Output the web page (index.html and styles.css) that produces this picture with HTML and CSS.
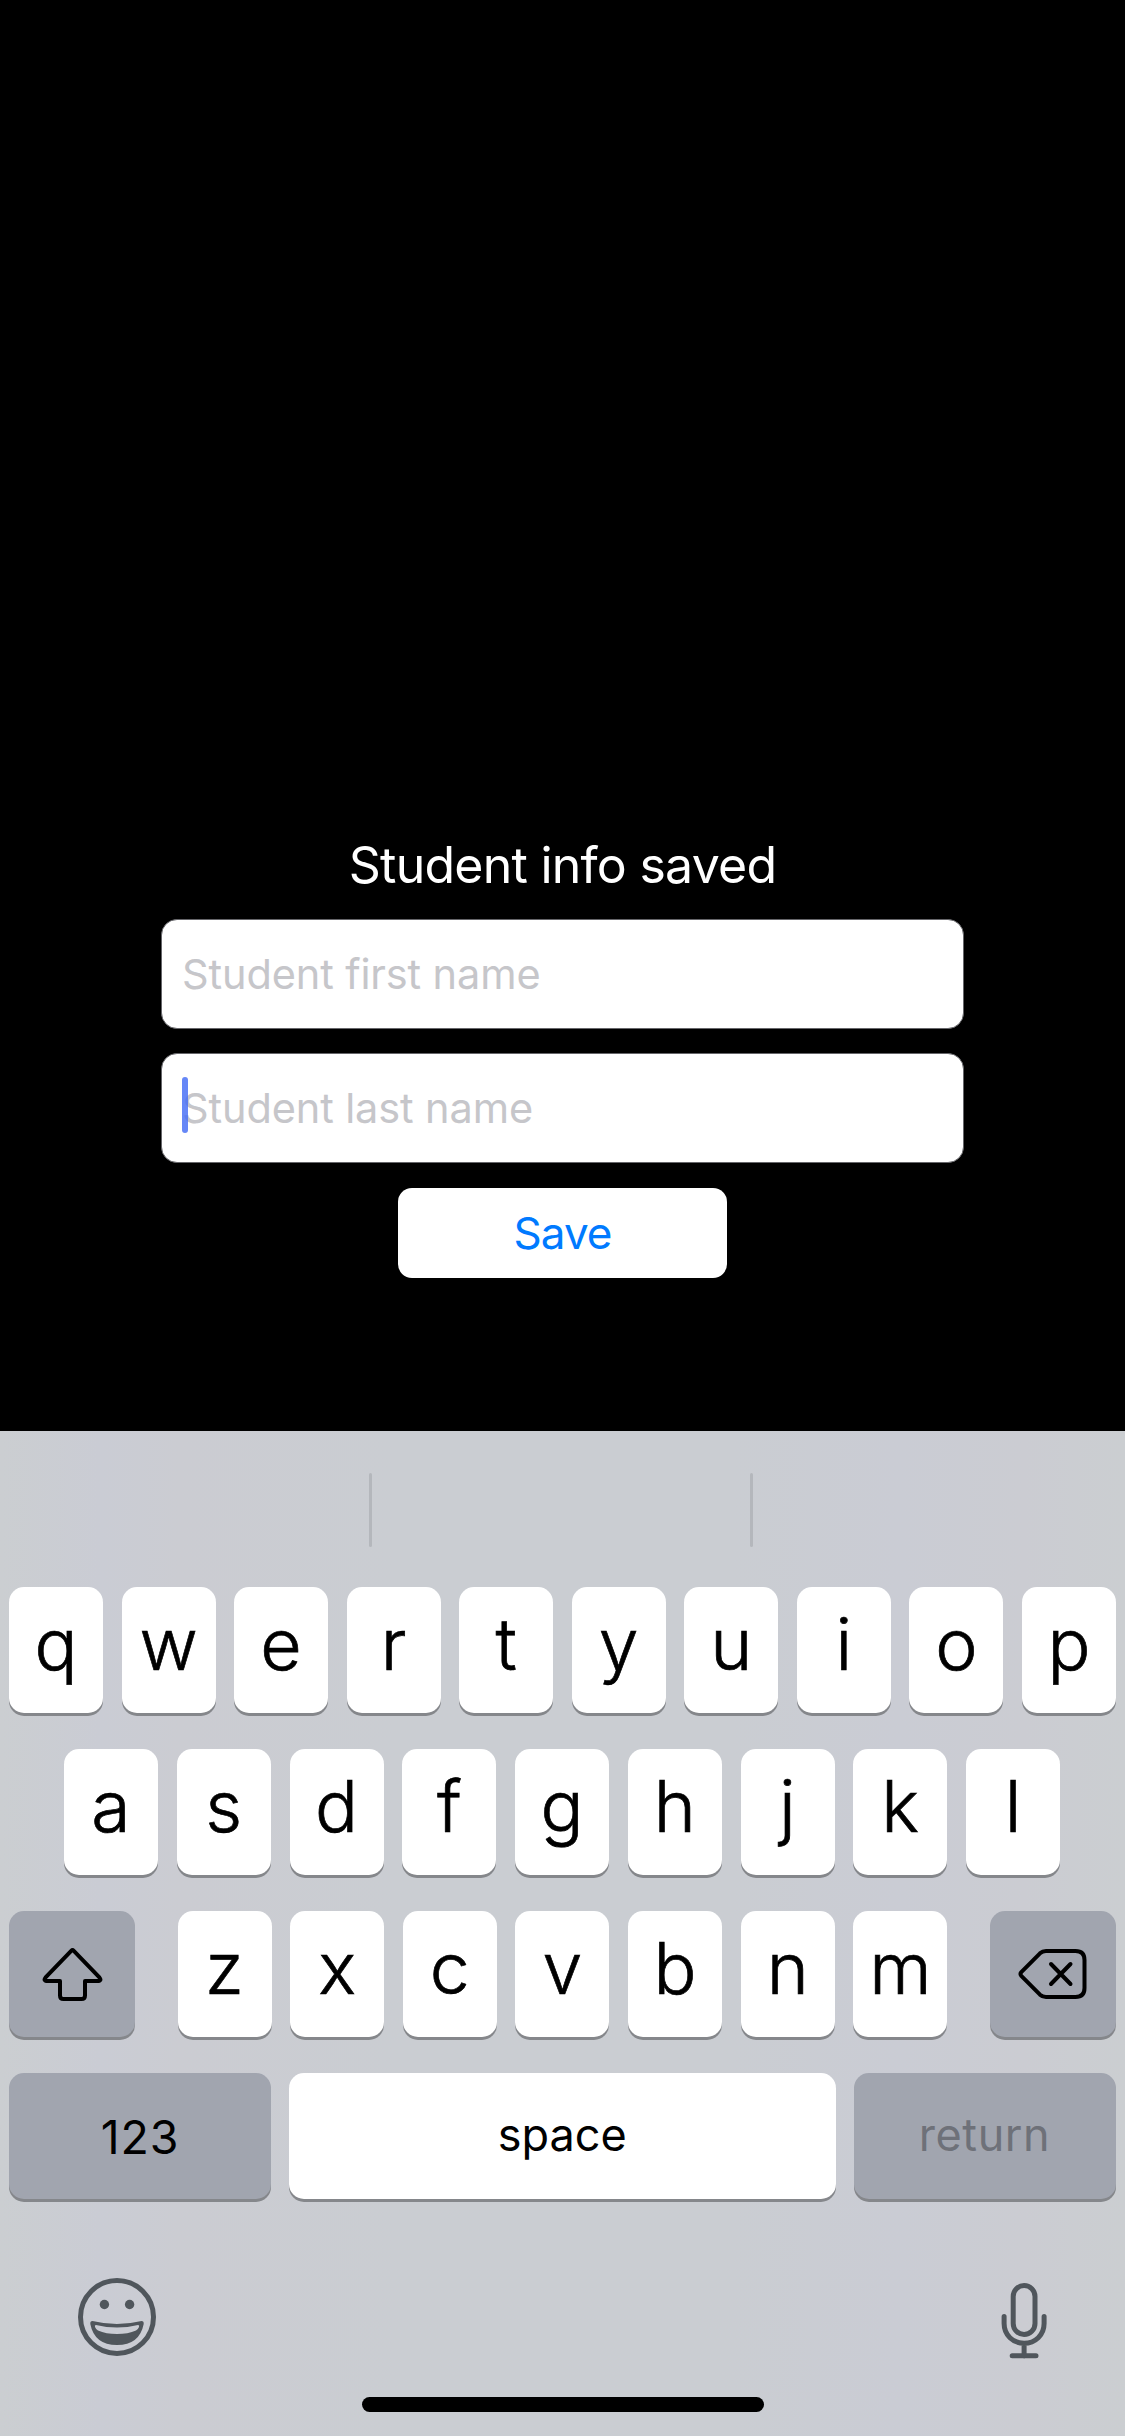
FILE: index.html
```html
<!DOCTYPE html>
<html lang="en">
<head>
<meta charset="utf-8">
<title>Student</title>
<link rel="stylesheet" href="styles.css">
</head>
<body>
<main class="form">
  <h1 class="status"><span class="status-text">Student info saved</span></h1>
  <div class="field"><span class="first">Student first name</span></div>
  <div class="field"><span class="last">Student last name</span><i class="caret"></i></div>
  <button class="save"><span>Save</span></button>
</main>
<section class="keyboard">
  <div class="suggestions"><i></i><i></i></div>
  <div class="row top">
    <b class="key">q</b><b class="key">w</b><b class="key">e</b><b class="key">r</b><b class="key">t</b><b class="key">y</b><b class="key">u</b><b class="key">i</b><b class="key">o</b><b class="key">p</b>
  </div>
  <div class="row home">
    <b class="key">a</b><b class="key">s</b><b class="key">d</b><b class="key">f</b><b class="key">g</b><b class="key">h</b><b class="key">j</b><b class="key">k</b><b class="key">l</b>
  </div>
  <div class="row lower">
    <b class="key dark mod"><svg width="126" height="126" viewBox="0 0 126 126" fill="none" stroke="#000" stroke-width="4" stroke-linejoin="round"><path d="M62.2 39.8Q63.5 38.5 64.8 39.8L90.4 66.4Q92 68.4 91 69.4Q90.4 70 89.5 70H76V84.5Q76 88 72.5 88H54.5Q51 88 51 84.5V70H37.5Q36.6 70 36 69.4Q35 68.4 36.6 66.4Z"/></svg></b>
    <div class="letters">
      <b class="key">z</b><b class="key">x</b><b class="key">c</b><b class="key">v</b><b class="key">b</b><b class="key">n</b><b class="key">m</b>
    </div>
    <b class="key dark mod"><svg width="126" height="126" viewBox="0 0 126 126" fill="none" stroke="#000" stroke-width="4" stroke-linejoin="round" stroke-linecap="round"><path d="M31.3 61.2L50 42.3Q52.5 40 56 40H85.5Q94.500 40 94.500 49V77Q94.500 86 85.5 86H56Q52.5 86 50 83.7L31.3 64.8Q29.7 63 31.3 61.2Z"/><path d="M61 53L80.5 73M80.5 53L61 73"/></svg></b>
  </div>
  <div class="row bottom">
    <b class="key dark numbers"><span>123</span></b>
    <b class="key space"><span>space</span></b>
    <b class="key dark return"><span>return</span></b>
  </div>
  <div class="tools">
    <svg width="78" height="78" viewBox="0 0 78 78"><circle cx="39" cy="39" r="36.5" fill="none" stroke="#50565c" stroke-width="5"/><circle cx="26.4" cy="26.5" r="4.7" fill="#50565c"/><circle cx="51.6" cy="26.5" r="4.7" fill="#50565c"/><path fill="#50565c" fill-rule="evenodd" d="M14.5 43Q39 49 63.5 43Q66 43 65.7 46Q61.5 67 39 67Q16.5 67 12.3 46Q12 43 14.5 43ZM18 47Q16.3 47 17 49Q18 51.5 20 52.5Q28 56 39 56Q50 56 58 52.5Q60 51.5 61 49Q61.7 47 60 47Q39 52 18 47Z"/></svg>
    <svg width="46" height="76" viewBox="0 0 46 76" fill="none" stroke="#50565c" stroke-width="5" stroke-linecap="round"><rect x="12.2" y="2.5" width="21.8" height="49" rx="10.9"/><path d="M3.1 33.5V40.5C3.1 52 12 60.3 23.1 60.3S43.1 52 43.1 40.5V33.5M23.1 60.5V73M11.2 72.7H35"/></svg>
  </div>
  <div class="home-bar"></div>
</section>
</body>
</html>
```
FILE: styles.css
```css
* { box-sizing: border-box; }
body {
  margin: 0;
  width: 1125px;
  height: 2436px;
  display: flex;
  flex-direction: column;
  overflow: hidden;
  background: #000;
  font-family: Inter, "Liberation Sans", sans-serif;
}
.form {
  height: 1431px;
  padding-top: 835px;
  display: flex;
  flex-direction: column;
  align-items: center;
  flex: none;
}
.status {
  margin: 0 0 24px;
  font-size: 50px;
  line-height: 60px;
  font-weight: 400;
  letter-spacing: -.75px;
  color: #fff;
}
.field {
  position: relative;
  width: 803px;
  height: 110px;
  margin-bottom: 24px;
  padding-left: 20px;
  display: flex;
  align-items: center;
  background: #fff;
  border: 1px solid #66666a;
  border-radius: 16px;
  font-size: 41.5px;
  letter-spacing: -.12px;
  color: #c6c6ca;
}
.caret {
  position: absolute;
  left: 20px;
  top: 23px;
  width: 6px;
  height: 56px;
  border-radius: 3px;
  background: rgba(68, 108, 245, .82);
}
.save {
  width: 329px;
  height: 90px;
  margin-top: 1px;
  padding: 0;
  border: 0;
  border-radius: 14px;
  background: #fff;
  color: #007aff;
  font: 400 44px Inter, "Liberation Sans", sans-serif;
  letter-spacing: -.9px;
}
.keyboard {
  height: 1005px;
  flex: none;
  display: flex;
  flex-direction: column;
  background: linear-gradient(90deg, #cbced1 0, #caccd4 9%, #cbccd2 16%, #cacdd2 35%, #cacdd2 65%, #caccd4 80%, #cbccd2 91%, #cbced1 100%);
}
.suggestions {
  height: 156px;
  padding: 42px 372px 0 369px;
  display: flex;
  justify-content: space-between;
}
.suggestions i {
  width: 3px;
  height: 74px;
  border-radius: 2px;
  background: #b4b7bc;
}
.row {
  display: flex;
  justify-content: space-between;
  margin-bottom: 36px;
  padding: 0 9px;
}
.row.home { padding: 0 65px 0 64px; }
.key {
  width: 94px;
  height: 126px;
  flex: none;
  display: flex;
  align-items: center;
  justify-content: center;
  padding-bottom: 13px;
  border-radius: 15px;
  background: #fff;
  box-shadow: 0 3px 0 #85878b;
  font-size: 71.5px;
  font-weight: 300;
  -webkit-text-stroke: .7px #000;
  color: #000;
}
.letters {
  width: 770px;
  display: flex;
  justify-content: space-between;
}
.dark { background: #a1a5af; }
.key.mod { width: 126px; padding: 0; }
.key.numbers, .key.return { width: 262px; }
.key.space { width: 547px; }
.row.bottom {
  margin-bottom: 79px;
  padding-right: 9.5px;
}
.numbers, .space, .return {
  font-size: 45px;
  font-weight: 400;
  -webkit-text-stroke: 0;
  padding-bottom: 4px;
}
.numbers {
  padding: 2px 0 0;
  font-size: 46.5px;
  letter-spacing: .8px;
}
.key.return { color: #6e7179; letter-spacing: .6px; }
.tools {
  height: 119px;
  padding: 0 78px;
  display: flex;
  justify-content: space-between;
}
.tools svg:last-child { margin: 5px 0 0; }
.home-bar {
  width: 402px;
  height: 15px;
  margin-left: 362px;
  border-radius: 8px;
  background: #000;
}
```
